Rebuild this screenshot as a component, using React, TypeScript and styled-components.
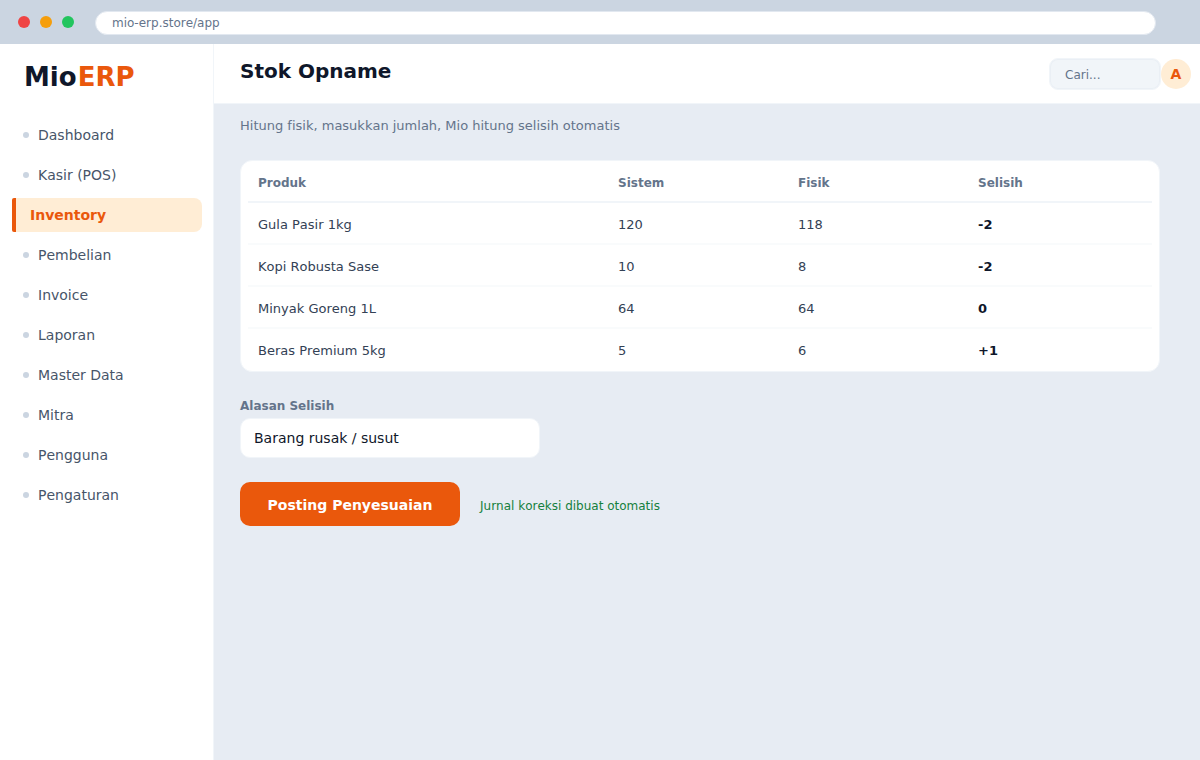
import React from "react";
import styled, { createGlobalStyle } from "styled-components";

const c = {
  ink: "#0f172a",
  text: "#334155",
  nav: "#475569",
  muted: "#64748b",
  line: "#e2e8f0",
  softLine: "#f1f5f9",
  orange: "#ea580c",
  peach: "#ffedd5",
  page: "#e7ecf3",
};

const GlobalStyle = createGlobalStyle`
  *, *::before, *::after { box-sizing: border-box; }
  body {
    margin: 0;
    background: ${c.page};
    color: ${c.ink};
    font-family: "DejaVu Sans", Verdana, sans-serif;
    font-size: 14px;
    font-kerning: none;
    font-variant-ligatures: none;
  }
  button, input { font: inherit; }
`;

const Window = styled.div`
  display: flex;
  flex-direction: column;
  min-height: 100vh;
`;

const BrowserBar = styled.div`
  display: flex;
  align-items: center;
  height: 44px;
  padding: 0 44px 0 18px;
  background: #cbd5e1;
`;

const Lights = styled.div`
  display: flex;
  gap: 10px;
  margin-right: 21px;
`;

const Light = styled.span<{ $color: string }>`
  width: 12px;
  height: 12px;
  border-radius: 50%;
  background: ${(p) => p.$color};
`;

const Address = styled.input`
  flex: 1;
  min-width: 0;
  height: 24px;
  margin-top: 2px;
  padding: 0 16px;
  border: 1px solid ${c.line};
  border-radius: 12px;
  background: #fff;
  color: ${c.muted};
  font-size: 12px;
  outline: none;
`;

const Body = styled.div`
  display: flex;
  flex: 1;
`;

const Sidebar = styled.aside`
  flex: none;
  width: 214px;
  padding: 17px 11px 16px 12px;
  border-right: 1px solid ${c.softLine};
  background: #fff;
`;

const Logo = styled.div`
  display: flex;
  gap: 1px;
  padding-left: 12px;
  margin-bottom: 25px;
  font-size: 26px;
  font-weight: 700;
  line-height: 32px;

  span { color: ${c.orange}; }
`;

const Nav = styled.nav`
  display: flex;
  flex-direction: column;
  gap: 6px;
`;

const NavLink = styled.a<{ $active?: boolean }>`
  display: flex;
  align-items: center;
  gap: 9px;
  height: 34px;
  padding-left: ${(p) => (p.$active ? 14 : 11)}px;
  border-left: ${(p) => (p.$active ? `4px solid ${c.orange}` : "0")};
  border-radius: ${(p) => (p.$active ? "2px 8px 8px 2px" : "8px")};
  background: ${(p) => (p.$active ? c.peach : "transparent")};
  color: ${(p) => (p.$active ? c.orange : c.nav)};
  font-weight: ${(p) => (p.$active ? 700 : 400)};
  text-decoration: none;
`;

const Dot = styled.span`
  width: 6px;
  height: 6px;
  border-radius: 50%;
  background: #cbd5e1;
`;

const Main = styled.div`
  display: flex;
  flex: 1;
  flex-direction: column;
  min-width: 0;
`;

const Header = styled.header`
  display: flex;
  align-items: center;
  height: 60px;
  padding: 0 9px 0 26px;
  border-bottom: 1px solid ${c.softLine};
  background: #fff;
`;

const Title = styled.h1`
  flex: 1;
  margin: 0;
  padding-bottom: 6px;
  font-size: 20px;
  line-height: 24px;
`;

const Search = styled.input`
  width: 112px;
  height: 32px;
  padding: 2px 15px 0;
  border: 1px solid ${c.softLine};
  border-radius: 9px;
  background: ${c.softLine};
  box-shadow: inset 0 0 0 1px #eaeff5;
  font-size: 12px;
  outline: none;

  &::placeholder { color: ${c.muted}; opacity: 1; }
`;

const Avatar = styled.button`
  width: 30px;
  height: 30px;
  padding: 0;
  border: 0;
  border-radius: 50%;
  background: ${c.peach};
  color: ${c.orange};
  font-weight: 700;
`;

const Content = styled.main`
  padding: 14px 40px 40px 26px;
`;

const Lead = styled.p`
  margin: 0 0 26px;
  color: ${c.muted};
  font-size: 13px;
  line-height: 16px;
`;

const Card = styled.section`
  padding: 0 7px;
  margin-bottom: 26px;
  border: 1px solid ${c.softLine};
  border-radius: 12px;
  background: #fff;
`;

const Table = styled.table`
  width: 100%;
  table-layout: fixed;
  border-collapse: separate;
  border-spacing: 0;
  font-size: 13px;
  text-align: left;
`;

const HeadCell = styled.th<{ $width?: number }>`
  width: ${(p) => (p.$width ? `${p.$width}px` : "auto")};
  height: 42px;
  padding: 4px 10px 0;
  border-bottom: 2px solid ${c.softLine};
  color: ${c.muted};
  font-size: 12px;
`;

const Cell = styled.td<{ $strong?: boolean }>`
  height: 42px;
  padding: 2px 10px 0;
  border-bottom: 2px solid #f9fbfc;
  color: ${(p) => (p.$strong ? c.ink : c.text)};
  font-weight: ${(p) => (p.$strong ? 700 : 400)};

  tr:last-child > & { border-bottom-color: transparent; }
`;

const Field = styled.div`
  display: flex;
  flex-direction: column;
  gap: 4px;
  max-width: 300px;
  margin-bottom: 24px;
`;

const Label = styled.label`
  color: ${c.muted};
  font-size: 12px;
  font-weight: 700;
  line-height: 16px;
`;

const TextInput = styled.input`
  width: 100%;
  height: 40px;
  padding: 0 13px;
  border: 1px solid ${c.softLine};
  border-radius: 10px;
  background: #fff;
  color: ${c.ink};
  outline: none;
`;

const Actions = styled.div`
  display: flex;
  align-items: center;
  gap: 20px;
`;

const PrimaryButton = styled.button`
  height: 44px;
  width: 220px;
  padding: 2px 0 0;
  border: 0;
  border-radius: 10px;
  background: ${c.orange};
  color: #fff;
  font-weight: 700;
`;

const Note = styled.span`
  padding-top: 4px;
  color: #15803d;
  font-size: 12px;
`;

const navItems = [
  "Dashboard",
  "Kasir (POS)",
  "Inventory",
  "Pembelian",
  "Invoice",
  "Laporan",
  "Master Data",
  "Mitra",
  "Pengguna",
  "Pengaturan",
];

const rows = [
  ["Gula Pasir 1kg", "120", "118", "-2"],
  ["Kopi Robusta Sase", "10", "8", "-2"],
  ["Minyak Goreng 1L", "64", "64", "0"],
  ["Beras Premium 5kg", "5", "6", "+1"],
];

export default function App() {
  return (
    <Window>
      <GlobalStyle />
      <BrowserBar>
        <Lights>
          <Light $color="#ef4444" />
          <Light $color="#f59e0b" />
          <Light $color="#22c55e" />
        </Lights>
        <Address aria-label="Alamat" defaultValue="mio-erp.store/app" />
      </BrowserBar>
      <Body>
        <Sidebar>
          <Logo>
            Mio<span>ERP</span>
          </Logo>
          <Nav>
            {navItems.map((item) => {
              const active = item === "Inventory";
              return (
                <NavLink
                  key={item}
                  href="#"
                  $active={active}
                  aria-current={active ? "page" : undefined}
                >
                  {!active && <Dot />}
                  {item}
                </NavLink>
              );
            })}
          </Nav>
        </Sidebar>
        <Main>
          <Header>
            <Title>Stok Opname</Title>
            <Search type="search" aria-label="Cari" placeholder="Cari..." />
            <Avatar type="button">A</Avatar>
          </Header>
          <Content>
            <Lead>Hitung fisik, masukkan jumlah, Mio hitung selisih otomatis</Lead>
            <Card>
              <Table>
                <thead>
                  <tr>
                    <HeadCell scope="col" $width={360}>Produk</HeadCell>
                    <HeadCell scope="col" $width={180}>Sistem</HeadCell>
                    <HeadCell scope="col" $width={180}>Fisik</HeadCell>
                    <HeadCell scope="col">Selisih</HeadCell>
                  </tr>
                </thead>
                <tbody>
                  {rows.map((row) => (
                    <tr key={row[0]}>
                      {row.map((value, i) => (
                        <Cell key={i} $strong={i === 3}>
                          {value}
                        </Cell>
                      ))}
                    </tr>
                  ))}
                </tbody>
              </Table>
            </Card>
            <Field>
              <Label htmlFor="reason">Alasan Selisih</Label>
              <TextInput id="reason" defaultValue="Barang rusak / susut" />
            </Field>
            <Actions>
              <PrimaryButton type="button">Posting Penyesuaian</PrimaryButton>
              <Note>Jurnal koreksi dibuat otomatis</Note>
            </Actions>
          </Content>
        </Main>
      </Body>
    </Window>
  );
}
